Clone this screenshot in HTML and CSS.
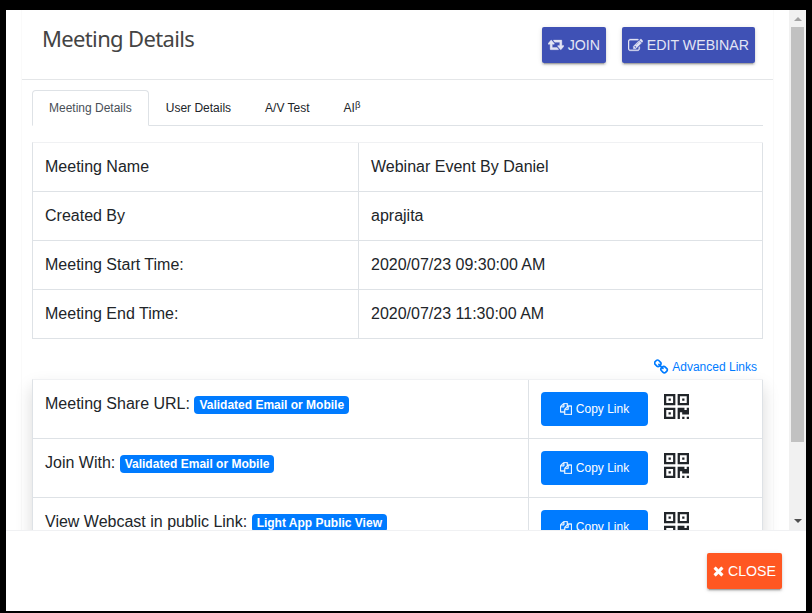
FILE: index.html
```html
<!DOCTYPE html>
<html lang="en">
<head>
<meta charset="utf-8">
<title>Meeting Details</title>
<link rel="stylesheet" href="styles.css">
</head>
<body>
<svg class="defs" width="0" height="0">
  <symbol id="retweet" viewBox="0 0 1920 1792"><path d="M1280 1248q0 13-9.500 22.500t-22.500 9.500h-960q-8 0-13.500-2t-9-7-5.500-8-3-11.500-1-11.500v-600h-192q-26 0-45-19t-19-45q0-24 15-41l320-384q19-22 49-22t49 22l320 384q15 17 15 41 0 26-19 45t-45 19h-192v384h576q16 0 25 11l160 192q7 10 7 21zm640-416q0 24-15 41l-320 384q-20 23-49 23t-49-23l-320-384q-15-17-15-41 0-26 19-45t45-19h192v-384h-576q-16 0-25-12l-160-192q-7-9-7-20 0-13 9.500-22.500t22.500-9.500h960q8 0 13.500 2t9 7 5.500 8 3 11.500 1 11.500v600h192q26 0 45 19t19 45z"/></symbol>
  <symbol id="edit" viewBox="0 0 1792 1792"><path d="M888 1184l116-116-152-152-116 116v56h96v96h56zm440-720q-16-16-33 1l-350 350q-17 17-1 33t33-1l350-350q17-17 1-33zm80 594v190q0 119-84.500 203.500t-203.500 84.500h-832q-119 0-203.500-84.500t-84.500-203.500v-832q0-119 84.500-203.500t203.500-84.500h832q63 0 117 25 15 7 18 23 3 17-9 29l-49 49q-14 14-32 8-23-6-45-6h-832q-66 0-113 47t-47 113v832q0 66 47 113t113 47h832q66 0 113-47t47-113v-126q0-13 9-22l64-64q15-15 35-7t20 29zm-96-738l288 288-672 672h-288v-288zm444 132l-92 92-288-288 92-92q28-28 68-28t68 28l152 152q28 28 28 68t-28 68z"/></symbol>
  <symbol id="link" viewBox="64 0 1664 1792"><path d="M1456 1216q0-40-28-68l-208-208q-28-28-68-28-42 0-72 32 3 3 19 18.500t21.500 21.500 15 19 13 25.500 3.500 27.500q0 40-28 68t-68 28q-15 0-27.500-3.500t-25.500-13-19-15-21.500-21.500-18.500-19q-33 31-33 73 0 40 28 68l206 207q27 27 68 27 40 0 68-26l147-146q28-28 28-67zm-703-705q0-40-28-68l-206-207q-28-28-68-28-39 0-68 27l-147 146q-28 28-28 67 0 40 28 68l208 208q27 27 68 27 42 0 72-31-3-3-19-18.500t-21.500-21.500-15-19-13-25.500-3.500-27.500q0-40 28-68t68-28q15 0 27.500 3.500t25.500 13 19 15 21.500 21.500 18.500 19q33-31 33-73zm895 705q0 120-85 203l-147 146q-83 83-203 83-121 0-204-85l-206-207q-83-83-83-203 0-123 88-209l-88-88q-86 88-208 88-120 0-204-84l-208-208q-84-84-84-204t85-203l147-146q83-83 203-83 121 0 204 85l206 207q83 83 83 203 0 123-88 209l88 88q86-88 208-88 120 0 204 84l208 208q84 84 84 204z"/></symbol>
  <symbol id="times" viewBox="192 0 1408 1792"><path d="M1490 1322q0 40-28 68l-136 136q-28 28-68 28t-68-28l-294-294-294 294q-28 28-68 28t-68-28l-136-136q-28-28-28-68t28-68l294-294-294-294q-28-28-28-68t28-68l136-136q28-28 68-28t68 28l294 294 294-294q28-28 68-28t68 28l136 136q28 28 28 68t-28 68l-294 294 294 294q28 28 28 68z"/></symbol>
  <symbol id="copy" viewBox="0 0 1792 1792"><path d="M1696 384q40 0 68 28t28 68v1216q0 40-28 68t-68 28h-960q-40 0-68-28t-28-68v-288h-544q-40 0-68-28t-28-68v-672q0-40 20-88t48-76l408-408q28-28 76-48t88-20h416q40 0 68 28t28 68v328q68-40 128-40h416zm-544 213l-299 299h299v-299zm-640-384l-299 299h299v-299zm196 647l316-316v-416h-384v416q0 40-28 68t-68 28h-416v640h512v-256q0-40 20-88t48-76zm956 804v-1152h-384v416q0 40-28 68t-68 28h-416v640h896z"/></symbol>
  <symbol id="qr" viewBox="0 0 11 11"><path fill-rule="evenodd" d="M0 0h5v5H0zM1 1v3h3V1zM2 2h1v1H2zM6 0h5v5H6zM7 1v3h3V1zM8 2h1v1H8zM0 6h5v5H0zM1 7v3h3V7zM2 8h1v1H2zM11 6v3H8V8H7v3H6V6h3v1h1V6zM8 10h1v1H8zM10 10h1v1h-1z"/></symbol>
</svg>
<main class="modal">
  <div class="body">
    <div class="viewport">
      <section class="card">
        <header class="head">
          <h1>Meeting Details</h1>
          <button class="btn join"><svg><use href="#retweet"/></svg><span>JOIN</span></button>
          <button class="btn edit"><svg><use href="#edit"/></svg><span>EDIT WEBINAR</span></button>
        </header>
        <nav class="tabs">
          <a class="active">Meeting Details</a><a>User Details</a><a>A/V Test</a><a>AI<sup>β</sup></a>
        </nav>
        <div class="grid info">
          <div>Meeting Name</div><div>Webinar Event By Daniel</div>
          <div>Created By</div><div>aprajita</div>
          <div>Meeting Start Time:</div><div>2020/07/23 09:30:00 AM</div>
          <div>Meeting End Time:</div><div>2020/07/23 11:30:00 AM</div>
        </div>
        <a class="advanced"><svg><use href="#link"/></svg><span>Advanced Links</span></a>
        <div class="grid links">
          <div>Meeting Share URL: <span class="badge">Validated Email or Mobile</span></div>
          <div class="actions"><button class="copy"><svg><use href="#copy"/></svg>Copy Link</button><svg class="qr"><use href="#qr"/></svg></div>
          <div>Join With: <span class="badge">Validated Email or Mobile</span></div>
          <div class="actions"><button class="copy"><svg><use href="#copy"/></svg>Copy Link</button><svg class="qr"><use href="#qr"/></svg></div>
          <div>View Webcast in public Link: <span class="badge">Light App Public View</span></div>
          <div class="actions"><button class="copy"><svg><use href="#copy"/></svg>Copy Link</button><svg class="qr"><use href="#qr"/></svg></div>
        </div>
      </section>
    </div>
    <div class="scrollbar"><i class="up"></i><i class="thumb"></i><i class="down"></i></div>
  </div>
  <footer class="foot"><button class="btn close"><svg><use href="#times"/></svg><span>CLOSE</span></button></footer>
</main>
</body>
</html>
```

FILE: styles.css
```css
* { box-sizing: border-box; }
body {
  margin: 0;
  height: 613px;
  overflow: hidden;
  padding: 10px 6px 2px;
  background: #000;
  color: #212529;
  font: 16px/24px "Liberation Sans", Arial, sans-serif;
}
svg { fill: currentColor; display: block; flex: none; }
.defs { position: absolute; }
.modal { height: 601px; background: #fff; display: flex; flex-direction: column; }
.body { height: 520px; display: flex; }
.viewport { flex: 1; overflow: hidden; padding: 0 15px; }
.card { height: 640px; border: solid #fafafa; border-width: 0 1px; }
.head {
  height: 70px;
  display: flex;
  align-items: flex-start;
  padding: 17px 18px 0 20px;
  border-bottom: 1px solid #e4e6e8;
}
h1 {
  flex: 1;
  margin: -3px 0 0;
  color: #444;
  font: 400 22px/28px "Noto Sans", sans-serif;
  letter-spacing: -0.65px;
}
.btn {
  height: 36px;
  border: 0;
  border-radius: 2px;
  padding: 0 6px;
  display: flex;
  align-items: center;
  justify-content: space-between;
  color: #fff;
  font: 14.2px "Liberation Sans", Arial, sans-serif;
  white-space: nowrap;
  box-shadow: 0 2px 2px rgba(0,0,0,.14), 0 3px 1px -2px rgba(0,0,0,.2), 0 1px 5px rgba(0,0,0,.12);
}
.btn svg { stroke: currentColor; stroke-width: 40; }
.join, .edit { background: #3f51b5; color: #e3e5f4; }
.join { width: 64px; margin-right: 16px; }
.join svg { width: 16px; height: 15px; margin-top: 2px; }
.edit { width: 133px; }
.edit svg { width: 15px; height: 15px; }
.tabs {
  display: flex;
  height: 36px;
  margin: 10px 10px 16px;
  border-bottom: 1px solid #dee2e6;
  font-size: 12px;
  line-height: 18px;
}
.tabs a { height: 36px; padding: 8px 16px; border: 1px solid transparent; white-space: nowrap; }
.tabs .active {
  color: #495057;
  background: #fff;
  border-color: #dee2e6 #dee2e6 #fff;
  border-radius: 4px 4px 0 0;
}
sup { font-size: 9.5px; line-height: 0; vertical-align: 4px; }
.grid {
  display: grid;
  margin: 0 10px;
  border: solid #dee2e6;
  border-width: 0 0 0 1px;
  background: #fff;
}
.grid > div { border: solid #dee2e6; border-width: 0 1px 1px 0; padding: 12px; }
.info { grid-template: repeat(4, 49px) / 326px 1fr; border-top: 1px solid #f0f1f3; }
.advanced {
  height: 40px;
  margin: 0 16px 0 0;
  padding-top: 16px;
  display: flex;
  align-items: center;
  justify-content: flex-end;
  gap: 3px;
  color: #007bff;
  font-size: 12px;
}
.advanced svg { width: 15px; height: 16px; }
.links {
  grid-template: repeat(3, 59px) / 496px 1fr;
  border-top: 1px solid #f0f1f3;
  box-shadow: 0 8px 16px rgba(0,0,0,.15);
}
.badge {
  display: inline-block;
  padding: 3px 5px;
  border-radius: 4px;
  background: #007bff;
  color: #fff;
  font-size: 12px;
  font-weight: 700;
  line-height: 12px;
}
.actions { display: flex; align-items: flex-start; gap: 16px; }
.copy {
  width: 107px;
  height: 34px;
  display: flex;
  align-items: center;
  justify-content: center;
  gap: 4px;
  padding: 0;
  border: 0;
  border-radius: 4px;
  background: #007bff;
  color: #fff;
  font: 12px "Liberation Sans", Arial, sans-serif;
}
.copy svg { width: 12px; height: 12px; stroke: currentColor; stroke-width: 50; overflow: visible; }
.qr { width: 25px; height: 25px; margin-top: 2px; }
.scrollbar {
  width: 17px;
  background: #f1f1f1;
  display: flex;
  flex-direction: column;
  align-items: center;
}
.up, .down { border: solid transparent; border-width: 0 4px; }
.up { border-bottom: 4px solid #a3a3a3; margin: 7px 0 6px; }
.thumb { width: 13px; height: 415px; background: #c1c1c1; }
.down { border-top: 4px solid #505050; margin-top: 77px; }
.foot {
  flex: 1;
  border-top: 1px solid #f0f1f3;
  padding: 22px 24px 0;
  display: flex;
  justify-content: flex-end;
}
.close { width: 75px; background: #ff5722; }
.close svg { width: 11px; height: 14px; }
```
